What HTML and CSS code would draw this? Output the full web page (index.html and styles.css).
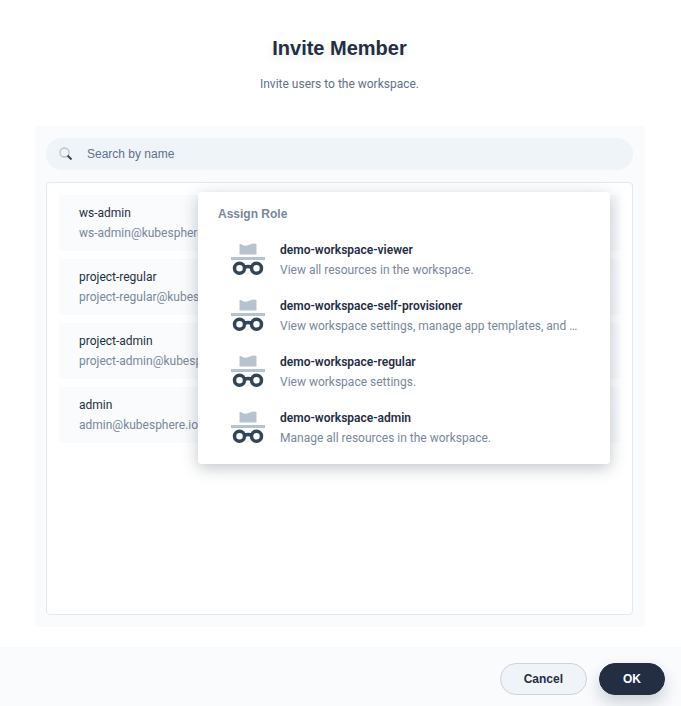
FILE: index.html
```html
<!DOCTYPE html>
<html lang="en">
<head>
<meta charset="utf-8">
<title>Invite Member</title>
<link rel="stylesheet" href="styles.css">
</head>
<body>
<svg class="sprite" aria-hidden="true">
  <symbol id="role" viewBox="0 0 40 40">
    <path class="icon-light" d="M11.500 14.500V4.500Q11.500 4 12.500 4Q16.500 6.500 19 5.500Q25 3 27.500 3.800L28.500 4.500V14.500z"/>
    <path class="icon-light" d="M3 17h34v3H3z"/>
    <path class="icon-dark" d="M16 27.500Q20 25.500 24 27.500"/>
    <circle class="icon-dark" cx="11.500" cy="28.300" r="5"/>
    <circle class="icon-dark" cx="28.500" cy="28.300" r="5"/>
  </symbol>
</svg>
<main class="dialog">
  <header class="heading">
    <h1>Invite Member</h1>
    <p>Invite users to the workspace.</p>
  </header>
  <section class="panel">
    <label class="search">
      <svg viewBox="0 0 16 16" width="16" height="16" aria-hidden="true">
        <circle cx="6.500" cy="6.500" r="4.500" fill="none" stroke="#b6c2cd" stroke-width="1.300"/>
        <path d="M9.500 9.500l4 4" stroke="#324558" stroke-width="2"/>
      </svg>
      <input type="text" placeholder="Search by name" aria-label="Search by name">
    </label>
    <div class="members">
      <ul class="member-list">
        <li><div><strong>ws-admin</strong><span>ws-admin@kubesphere.io</span></div></li>
        <li><div><strong>project-regular</strong><span>project-regular@kubesphere.io</span></div></li>
        <li><div><strong>project-admin</strong><span>project-admin@kubesphere.io</span></div></li>
        <li><div><strong>admin</strong><span>admin@kubesphere.io</span></div><button type="button" class="add" aria-label="Add"></button></li>
      </ul>
      <div class="roles">
        <h2>Assign Role</h2>
        <button type="button" class="role"><svg aria-hidden="true"><use href="#role"/></svg><span class="role-text"><strong>demo-workspace-viewer</strong><span>View all resources in the workspace.</span></span></button>
        <button type="button" class="role"><svg aria-hidden="true"><use href="#role"/></svg><span class="role-text"><strong>demo-workspace-self-provisioner</strong><span>View workspace settings, manage app templates, and …</span></span></button>
        <button type="button" class="role"><svg aria-hidden="true"><use href="#role"/></svg><span class="role-text"><strong>demo-workspace-regular</strong><span>View workspace settings.</span></span></button>
        <button type="button" class="role"><svg aria-hidden="true"><use href="#role"/></svg><span class="role-text"><strong>demo-workspace-admin</strong><span>Manage all resources in the workspace.</span></span></button>
      </div>
    </div>
  </section>
  <footer class="actions">
    <button type="button" class="btn">Cancel</button>
    <button type="button" class="btn btn-primary">OK</button>
  </footer>
</main>
</body>
</html>
```
FILE: styles.css
```css
* { box-sizing: border-box; }
body {
  margin: 0;
  background: #fff;
  color: #242e42;
  font: 12px/20px Roboto, "Liberation Sans", sans-serif;
}
button, input { font: inherit; }
.heading h1, .roles h2, .search input, .btn {
  font-family: "Liberation Sans", Arial, sans-serif;
}
.sprite { position: absolute; width: 0; height: 0; }
.icon-light { fill: #b6c2cd; }
.icon-dark { fill: none; stroke: #324558; stroke-width: 3.5; }
.dialog {
  display: flex;
  flex-direction: column;
  min-height: 100vh;
}
.heading { padding: 32px 21px 32px 19px; text-align: center; }
.heading h1 {
  margin: 0 0 10px;
  font-size: 20px;
  line-height: 32px;
  font-weight: 600;
  text-shadow: 0 4px 8px rgba(36, 46, 66, 0.1);
}
.heading p { margin: 0; color: #5f708a; }
.panel {
  display: flex;
  flex-direction: column;
  flex: 1;
  gap: 12px;
  margin: 0 36px 20px 35px;
  padding: 12px 12px 12px 11px;
  border-radius: 4px;
  background: #f9fbfd;
}
.search {
  display: flex;
  align-items: center;
  gap: 13px;
  height: 32px;
  padding: 0 12px;
  border-radius: 16px;
  background: #eff4f9;
}
.search input {
  flex: 1;
  min-width: 0;
  padding: 0;
  border: 0;
  outline: 0;
  background: none;
}
.search input::placeholder { color: #5f708a; opacity: 1; }
.members {
  position: relative;
  flex: 1;
  padding: 12px;
  border: 1px solid #e3e9ef;
  border-radius: 4px;
  background: #fff;
}
.member-list {
  display: grid;
  gap: 8px;
  margin: 0;
  padding: 0;
  list-style: none;
}
.member-list li {
  display: flex;
  align-items: center;
  justify-content: space-between;
  padding: 8px 20px;
  border-radius: 2px;
  background: #f9fbfd;
}
.member-list strong, .member-list span { display: block; }
.member-list strong { font-weight: 400; }
.member-list span { color: #79879c; }
.add {
  width: 32px;
  height: 32px;
  border: 0;
  border-radius: 50%;
  background: #242e42;
  box-shadow: 0 8px 16px rgba(36, 46, 66, 0.2);
}
.roles {
  position: absolute;
  top: 9px;
  right: 22px;
  width: 412px;
  max-width: 90%;
  padding: 12px 0 8px;
  border-radius: 4px;
  background: #fff;
  box-shadow: 0 4px 16px rgba(36, 46, 66, 0.28);
}
.roles h2 {
  margin: 0 20px 8px;
  color: #79879c;
  font-size: 12px;
  font-weight: 700;
}
.role {
  display: flex;
  align-items: center;
  gap: 12px;
  width: 100%;
  padding: 8px 30px;
  border: 0;
  background: none;
  color: #242e42;
  text-align: left;
}
.role svg { flex: none; width: 40px; height: 40px; }
.role-text { min-width: 0; }
.role-text strong, .role-text span {
  display: block;
  overflow: hidden;
  white-space: nowrap;
  text-overflow: ellipsis;
}
.role-text strong { font-weight: 600; }
.role-text span { color: #79879c; }
.actions {
  display: flex;
  justify-content: flex-end;
  gap: 12px;
  padding: 16px 16px 11px;
  background: #f9fbfd;
}
.btn {
  height: 32px;
  padding: 0 23px;
  border: 1px solid #ccd3db;
  border-radius: 16px;
  background: #eff4f9;
  color: #242e42;
  font-weight: 600;
}
.btn-primary {
  border-color: #242e42;
  background: #242e42;
  color: #fff;
  box-shadow: 0 8px 16px rgba(36, 46, 66, 0.2);
}
```
